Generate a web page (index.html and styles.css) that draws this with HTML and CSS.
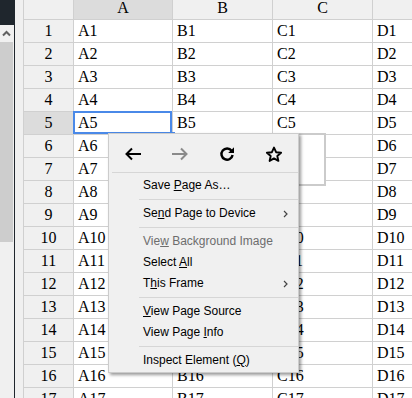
FILE: index.html
```html
<!DOCTYPE html>
<html lang="en">
<head>
  <meta charset="UTF-8">
  <title>Sheet</title>
  <link rel="stylesheet" href="styles.css">
</head>
<body>

<div class="window">
  <div class="scrollbar">
    <div class="sb-top"></div>
    <div class="sb-arrow">
      <svg width="9" height="7" viewBox="0 0 9 7"><path d="M1 5.5 4.5 2 8 5.5" fill="none" stroke="#606060" stroke-width="2"/></svg>
    </div>
    <div class="sb-thumb"></div>
  </div>
  <div class="edge"></div>
  <div class="gutter"></div>

  <div class="sheet">
    <div class="row head"><div class="rh"></div><div class="c a on">A</div><div class="c">B</div><div class="c">C</div><div class="c"></div></div>
    <div class="row"><div class="rh">1</div><div class="c a">A1</div><div class="c">B1</div><div class="c">C1</div><div class="c">D1</div></div>
    <div class="row"><div class="rh">2</div><div class="c a">A2</div><div class="c">B2</div><div class="c">C2</div><div class="c">D2</div></div>
    <div class="row"><div class="rh">3</div><div class="c a">A3</div><div class="c">B3</div><div class="c">C3</div><div class="c">D3</div></div>
    <div class="row"><div class="rh">4</div><div class="c a">A4</div><div class="c">B4</div><div class="c">C4</div><div class="c">D4</div></div>
    <div class="row"><div class="rh on">5</div><div class="c a selected">A5</div><div class="c">B5</div><div class="c">C5</div><div class="c">D5</div></div>
    <div class="row"><div class="rh">6</div><div class="c a">A6</div><div class="c">B6</div><div class="c">C6</div><div class="c">D6</div></div>
    <div class="row"><div class="rh">7</div><div class="c a">A7</div><div class="c">B7</div><div class="c">C7</div><div class="c">D7</div></div>
    <div class="row"><div class="rh">8</div><div class="c a">A8</div><div class="c">B8</div><div class="c">C8</div><div class="c">D8</div></div>
    <div class="row"><div class="rh">9</div><div class="c a">A9</div><div class="c">B9</div><div class="c">C9</div><div class="c">D9</div></div>
    <div class="row"><div class="rh">10</div><div class="c a">A10</div><div class="c">B10</div><div class="c">C10</div><div class="c">D10</div></div>
    <div class="row"><div class="rh">11</div><div class="c a">A11</div><div class="c">B11</div><div class="c">C11</div><div class="c">D11</div></div>
    <div class="row"><div class="rh">12</div><div class="c a">A12</div><div class="c">B12</div><div class="c">C12</div><div class="c">D12</div></div>
    <div class="row"><div class="rh">13</div><div class="c a">A13</div><div class="c">B13</div><div class="c">C13</div><div class="c">D13</div></div>
    <div class="row"><div class="rh">14</div><div class="c a">A14</div><div class="c">B14</div><div class="c">C14</div><div class="c">D14</div></div>
    <div class="row"><div class="rh">15</div><div class="c a">A15</div><div class="c">B15</div><div class="c">C15</div><div class="c">D15</div></div>
    <div class="row"><div class="rh">16</div><div class="c a">A16</div><div class="c">B16</div><div class="c">C16</div><div class="c">D16</div></div>
    <div class="row"><div class="rh">17</div><div class="c a">A17</div><div class="c">B17</div><div class="c">C17</div><div class="c">D17</div></div>
  </div>
</div>

<!-- empty popup box behind the context menu -->
<div class="popup"></div>

<div class="menu">
  <div class="nav">
    <span class="nav-btn">
      <svg width="18" height="14" viewBox="0 0 18 14"><path d="M17 7H2.5M8 1.5 2.5 7 8 12.5" fill="none" stroke="#000" stroke-width="2"/></svg>
    </span>
    <span class="nav-btn">
      <svg width="18" height="14" viewBox="0 0 18 14"><path d="M1 7h14.5M10 1.5 15.5 7 10 12.5" fill="none" stroke="#8a8a8a" stroke-width="2"/></svg>
    </span>
    <span class="nav-btn">
      <svg width="16" height="16" viewBox="0 0 16 16"><path d="M12.6 4.8A5.6 5.6 0 1 0 13.6 9" fill="none" stroke="#000" stroke-width="2.4"/><path d="M15 1.2V7H9.2z" fill="#000"/></svg>
    </span>
    <span class="nav-btn">
      <svg width="18" height="17" viewBox="0 0 18 17"><path d="M9 1.6l2.1 4.6 5 .5-3.8 3.3 1.1 4.9L9 12.4l-4.4 2.5 1.1-4.9-3.8-3.3 5-.5z" fill="none" stroke="#000" stroke-width="1.9" stroke-linejoin="round"/></svg>
    </span>
  </div>
  <div class="sep nav-sep"></div>
  <div class="item"><span class="label">Save <u>P</u>age As…</span></div>
  <div class="sep"></div>
  <div class="item">
    <span class="label">Se<u>n</u>d Page to Device</span>
    <svg class="more" width="5" height="8" viewBox="0 0 5 8"><path d="M1 1l3 3-3 3" fill="none" stroke="#444" stroke-width="1.2"/></svg>
  </div>
  <div class="sep"></div>
  <div class="item off"><span class="label">Vie<u>w</u> Background Image</span></div>
  <div class="item"><span class="label">Select <u>A</u>ll</span></div>
  <div class="item">
    <span class="label">T<u>h</u>is Frame</span>
    <svg class="more" width="5" height="8" viewBox="0 0 5 8"><path d="M1 1l3 3-3 3" fill="none" stroke="#444" stroke-width="1.2"/></svg>
  </div>
  <div class="sep"></div>
  <div class="item"><span class="label"><u>V</u>iew Page Source</span></div>
  <div class="item"><span class="label">View Page <u>I</u>nfo</span></div>
  <div class="sep"></div>
  <div class="item"><span class="label">Inspect Element (<u>Q</u>)</span></div>
</div>

</body>
</html>
```

FILE: styles.css
```css
body {
  margin: 0;
  height: 398px;
  overflow: hidden;
  background: #fff;
  font-family: "Liberation Serif", serif;
  font-size: 16px;
  color: #000;
}
.window {
  display: flex;
  height: 398px;
}

/* left scrollbar strip */
.scrollbar {
  width: 14px;
  flex: none;
  background: #f0f0f0;
}
.sb-top {
  height: 25px;
  background: #1f262d;
}
.sb-arrow {
  height: 17px;
  display: flex;
  justify-content: center;
  align-items: center;
  padding-right: 1px;
}
.sb-thumb {
  width: 13px;
  height: 200px;
  background: #cdcdcd;
}
.edge {
  width: 1px;
  flex: none;
  background: #1f262d;
}
.gutter {
  width: 8px;
  flex: none;
  background: #f0f0f0;
}

/* grid */
.sheet {
  flex: 1;
  overflow: hidden;
}
.row {
  display: flex;
  height: 23px;
}
.row > div {
  box-sizing: border-box;
  flex: none;
  height: 100%;
  border-right: 1px solid #d0d0d0;
  border-bottom: 1px solid #d0d0d0;
  line-height: 22px;
  white-space: nowrap;
}
.rh {
  width: 51px;
  border-left: 1px solid #d0d0d0;
  background: #f0f0f0;
  text-align: center;
}
.c {
  width: 100px;
  padding-left: 4px;
}
.c.a {
  width: 99px;
}
.head {
  height: 20px;
}
.head > div {
  background: #f0f0f0;
  text-align: center;
  padding-left: 0;
  line-height: 16px !important;
}
.head > .on,
.rh.on {
  background: #dcdcdc;
}
.selected {
  position: relative;
}
.selected::before {
  content: "";
  position: absolute;
  left: -1px;
  top: -1px;
  right: 0;
  bottom: 0;
  border: 2px solid #4a89e8;
}
.selected::after {
  content: "";
  position: absolute;
  right: -3px;
  bottom: -2px;
  width: 5px;
  height: 4px;
  background: #4a89e8;
}

/* popup behind the menu */
.popup {
  position: absolute;
  left: 272px;
  top: 133px;
  width: 54px;
  height: 53px;
  box-sizing: border-box;
  border: 2px solid #cbcbcb;
  background: #fff;
}

/* context menu */
.menu {
  position: absolute;
  left: 108px;
  top: 133px;
  width: 191px;
  box-sizing: border-box;
  padding: 2px 0 1px;
  background: #f0f0f0;
  border: 1px solid #cccccc;
  box-shadow: 2px 2px 3px rgba(0, 0, 0, 0.4);
  font-family: "Liberation Sans", sans-serif;
  font-size: 12px;
  color: #000;
}
.nav {
  display: flex;
  height: 36px;
}
.nav-btn {
  flex: 1;
  display: flex;
  justify-content: center;
  align-items: center;
}
.sep {
  height: 1px;
  background: #d6d6d6;
  margin: 3px 0 3px 30px;
}
.nav-sep {
  margin: 0 0 2px 3px;
}
.item {
  height: 21px;
  line-height: 21px;
  padding: 0 10px 0 34px;
  display: flex;
  align-items: center;
  white-space: nowrap;
}
.label {
  flex: 1;
}
.item.off {
  color: #6d6d6d;
}
.more {
  flex: none;
}
```
